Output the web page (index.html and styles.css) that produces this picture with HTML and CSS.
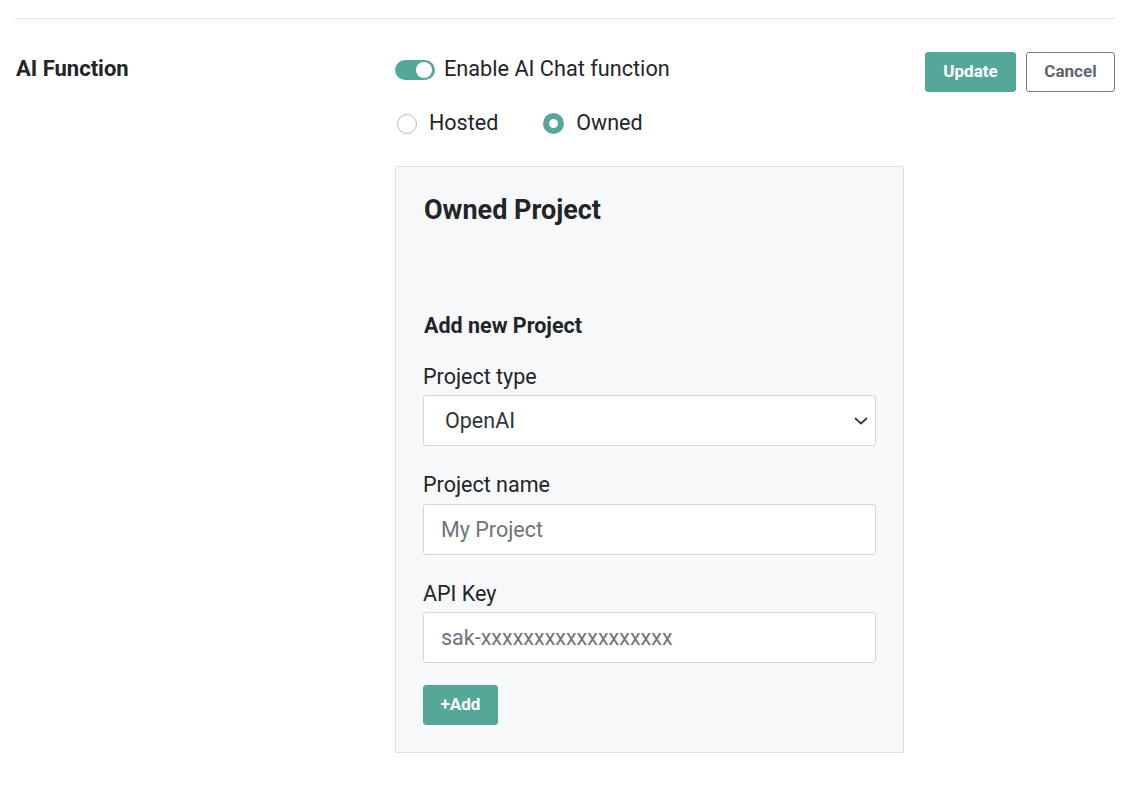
FILE: index.html
```html
<!DOCTYPE html>
<html lang="en">
<head>
<meta charset="utf-8">
<title>AI Function</title>
<link rel="stylesheet" href="styles.css">
</head>
<body>
<div class="page">
  <div class="settings-row">
    <div class="row-label">AI Function</div>
    <div class="row-body">
      <div class="toggle-row">
        <span class="switch"><span class="knob"></span></span>
        <span class="toggle-text">Enable AI Chat function</span>
      </div>
      <div class="radio-row">
        <label class="radio"><span class="radio-dot"></span><span>Hosted</span></label>
        <label class="radio"><span class="radio-dot checked"></span><span>Owned</span></label>
      </div>
      <div class="card">
        <h4 class="card-title">Owned Project</h4>
        <h5 class="card-subtitle">Add new Project</h5>
        <div class="form-group">
          <div class="field-label">Project type</div>
          <select class="field select">
            <option>OpenAI</option>
          </select>
        </div>
        <div class="form-group">
          <div class="field-label">Project name</div>
          <input class="field" type="text" placeholder="My Project">
        </div>
        <div class="form-group last">
          <div class="field-label">API Key</div>
          <input class="field" type="text" placeholder="sak-xxxxxxxxxxxxxxxxxx">
        </div>
        <button class="btn btn-primary">+Add</button>
      </div>
    </div>
    <div class="row-actions">
      <button class="btn btn-primary">Update</button>
      <button class="btn btn-outline">Cancel</button>
    </div>
  </div>
</div>
</body>
</html>
```

FILE: styles.css
```css
* { box-sizing: border-box; }

html, body {
  margin: 0;
  padding: 0;
  background: #ffffff;
}

body {
  font-family: Roboto, "Liberation Sans", Arial, sans-serif;
  color: #212529;
  font-size: 21.5px;
  line-height: 1.5;
}

.page {
  padding: 18px 16px 0 15px;
}

.settings-row {
  border-top: 1px solid #e1e3e6;
  padding-top: 34px;
  display: flex;
  align-items: flex-start;
}

.row-label {
  width: 380px;
  flex: none;
  padding-left: 1px;
  font-size: 22px;
  font-weight: 700;
  line-height: 32px;
}

.row-body {
  flex: 1;
}

.toggle-row {
  display: flex;
  align-items: center;
  height: 32px;
}

.switch {
  width: 40px;
  height: 20px;
  border-radius: 10px;
  background: #55a797;
  position: relative;
  flex: none;
  margin-right: 9px;
  margin-top: 1px;
}

.knob {
  position: absolute;
  right: 3px;
  top: 2px;
  width: 16px;
  height: 16px;
  border-radius: 50%;
  background: #ffffff;
}

.toggle-text {
  line-height: 32px;
  font-size: 21.7px;
}

.radio-row {
  display: flex;
  align-items: center;
  margin-top: 22px;
  height: 32px;
  padding-left: 2px;
}

.radio {
  display: flex;
  align-items: center;
  gap: 12px;
  margin-right: 45px;
}

.radio-dot {
  width: 20px;
  height: 20px;
  border-radius: 50%;
  border: 1px solid #b4bac1;
  background: #ffffff;
  flex: none;
  margin-top: 1px;
}

.radio-dot.checked {
  width: 21px;
  height: 21px;
  border: 6.5px solid #55a797;
  background: #ffffff;
}

.card {
  margin-top: 27px;
  width: 509px;
  background: #f7f8fa;
  border: 1px solid #dcdfe3;
  border-radius: 2px;
  padding: 27px 27px 27px 27px;
}

.card-title {
  margin: 0;
  padding-left: 1px;
  font-size: 27px;
  font-weight: 700;
  line-height: 1.2;
}

.card-subtitle {
  margin: 87px 0 22px 0;
  padding-left: 1px;
  font-size: 21.5px;
  font-weight: 700;
  line-height: 1.2;
}

.form-group {
  margin-bottom: 23px;
}

.form-group.last {
  margin-bottom: 22px;
}

.field-label {
  margin-bottom: 2px;
  line-height: 1.5;
}

.field {
  display: block;
  width: 100%;
  height: 51px;
  padding: 0 17px;
  font-family: Roboto, "Liberation Sans", Arial, sans-serif;
  font-size: 21.5px;
  color: #2f363d;
  background: #ffffff;
  border: 1px solid #d3d7dc;
  border-radius: 3px;
  outline: none;
}

.field::placeholder {
  color: #6c757d;
}

.select {
  appearance: none;
  -webkit-appearance: none;
  padding-left: 21px;
  background-image: url("data:image/svg+xml,%3Csvg xmlns='http://www.w3.org/2000/svg' viewBox='0 0 14 8'%3E%3Cpath fill='none' stroke='%23343a40' stroke-linecap='round' stroke-linejoin='round' stroke-width='1.8' d='M1.5 1.5l5.5 5 5.5-5'/%3E%3C/svg%3E");
  background-repeat: no-repeat;
  background-position: right 7px center;
  background-size: 14px 8px;
}

.row-actions {
  display: flex;
  gap: 10px;
  margin-top: -1px;
}

.btn {
  height: 40px;
  padding: 0 17px;
  font-family: Roboto, "Liberation Sans", Arial, sans-serif;
  font-size: 17px;
  font-weight: 700;
  border-radius: 3px;
  cursor: pointer;
  line-height: 1;
}

.btn-primary {
  background: #55a797;
  color: #ffffff;
  border: 1px solid #55a797;
}

.card .btn-primary {
  width: 75px;
  padding: 0;
}

.row-actions .btn-primary {
  width: 91px;
  padding: 0 0 2px 0;
}

.btn-outline {
  width: 89px;
  padding: 0 0 2px 0;
  background: #ffffff;
  color: #5f6670;
  border: 1px solid #737b85;
}
```
